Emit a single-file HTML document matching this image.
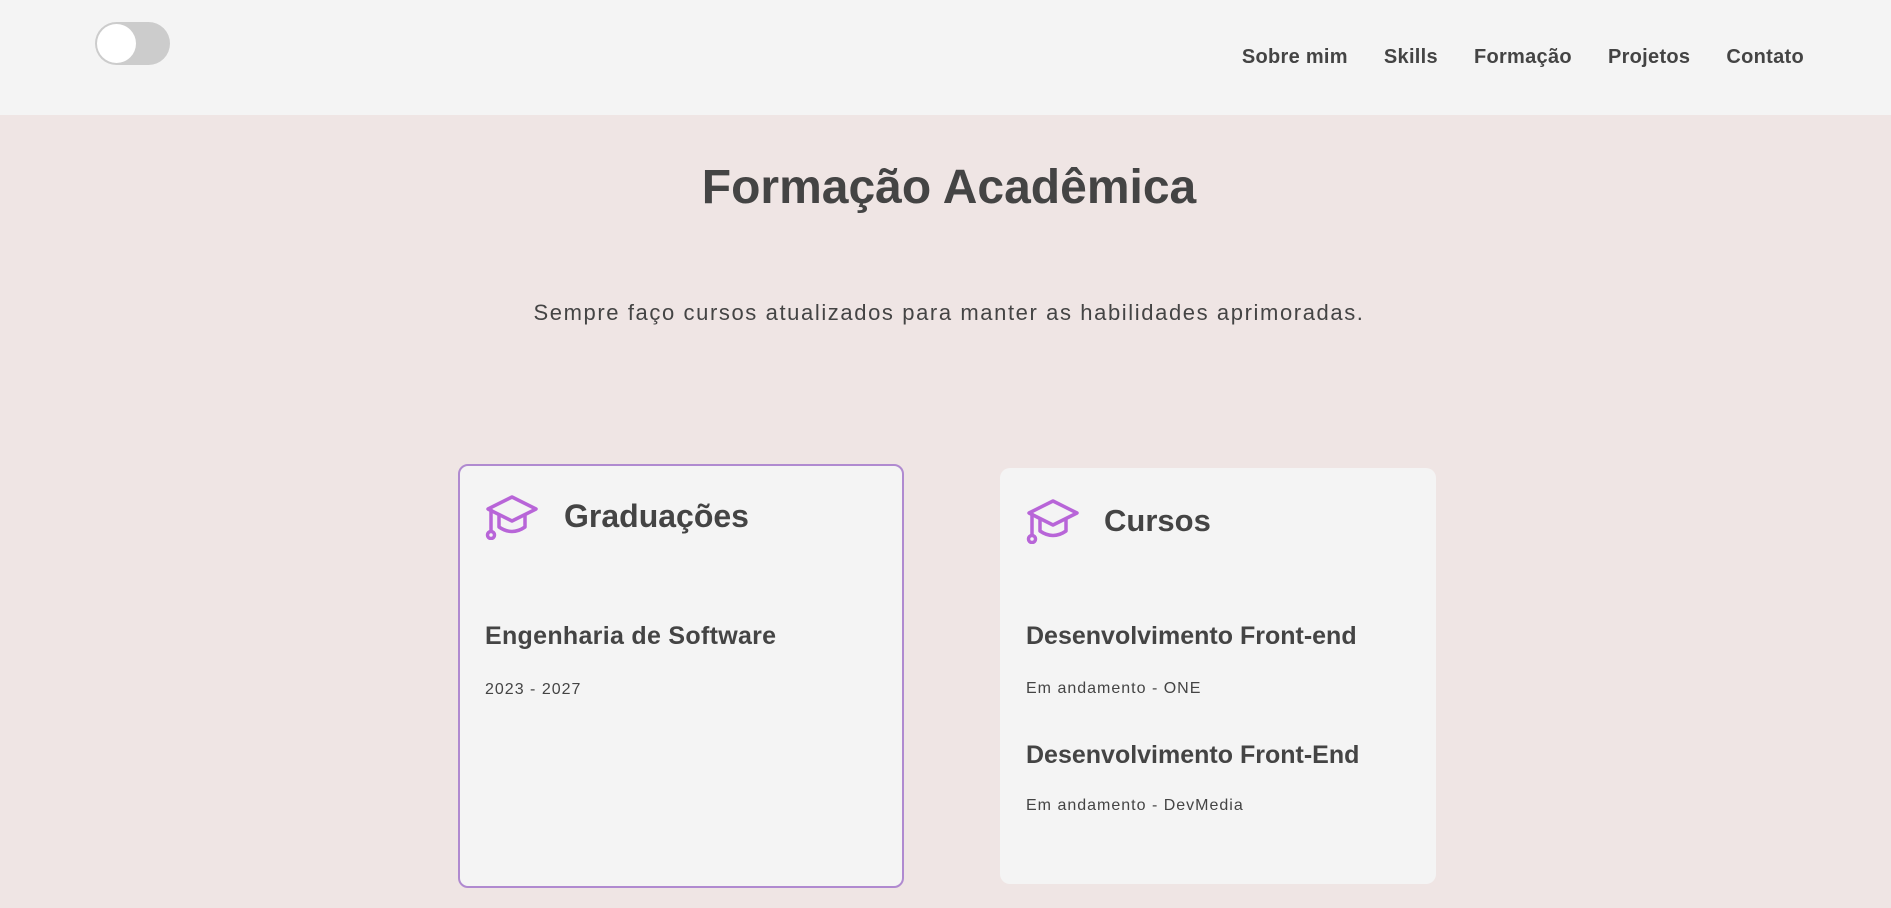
<!DOCTYPE html>
<html><head><meta charset="utf-8"><style>
*{margin:0;padding:0;box-sizing:border-box}
body{width:1891px;height:908px;overflow:hidden;background:#efe5e4;font-family:"Liberation Sans",sans-serif;color:#444;position:relative}
header{position:absolute;left:0;top:0;width:1891px;height:115px;background:#f4f4f4}
.tog{position:absolute;left:95px;top:22px;width:75px;height:43px;border-radius:22px;background:#ccc}
.tog:after{content:"";position:absolute;left:2px;top:2px;width:39px;height:39px;border-radius:50%;background:#fff}
nav{position:absolute;right:87px;top:46px;font-size:20px;font-weight:bold;display:flex;gap:36px;color:#444;letter-spacing:0.3px}
.a{position:absolute;white-space:nowrap}
h1{position:absolute;left:0;width:1898px;text-align:center;top:160px;font-size:48px;font-weight:bold}
.sub{position:absolute;left:0;width:1898px;text-align:center;top:300px;font-size:22px;letter-spacing:1.6px}
.card{position:absolute;background:#f4f4f4;border-radius:10px}
.ic{position:absolute;width:54px;height:46px}
.s{font-size:16px;letter-spacing:1px}
</style></head><body>
<header><div class="tog"></div>
<nav><span>Sobre mim</span><span>Skills</span><span>Formação</span><span>Projetos</span><span>Contato</span></nav></header>
<h1>Formação Acadêmica</h1>
<div class="sub">Sempre faço cursos atualizados para manter as habilidades aprimoradas.</div>
<div class="card" style="left:458px;top:464px;width:446px;height:424px;border:2px solid #b08ad0"></div>
<div class="card" style="left:1000px;top:468px;width:436px;height:416px"></div>
<svg class="ic" style="left:485px;top:494px" viewBox="0 0 54 46" fill="none" stroke="#b865d8" stroke-width="3.5" stroke-linejoin="round" stroke-linecap="round"><path d="M3 15 L27 3 L51 15 L27 27 Z"/><path d="M14 21 V33 Q27 42 40 33 V21"/><path d="M6 16 V37"/><circle cx="6" cy="41" r="3.5"/></svg>
<svg class="ic" style="left:1026px;top:498px" viewBox="0 0 54 46" fill="none" stroke="#b865d8" stroke-width="3.5" stroke-linejoin="round" stroke-linecap="round"><path d="M3 15 L27 3 L51 15 L27 27 Z"/><path d="M14 21 V33 Q27 42 40 33 V21"/><path d="M6 16 V37"/><circle cx="6" cy="41" r="3.5"/></svg>
<div class="a" style="left:564px;top:498px;font-size:32px;font-weight:bold">Graduações</div>
<div class="a" style="left:1104px;top:503px;font-size:31px;font-weight:bold">Cursos</div>
<div class="a" style="left:485px;top:622px;font-size:25px;font-weight:bold;letter-spacing:0.3px">Engenharia de Software</div>
<div class="a s" style="left:485px;top:681px">2023 - 2027</div>
<div class="a" style="left:1026px;top:622px;font-size:25px;font-weight:bold">Desenvolvimento Front-end</div>
<div class="a s" style="left:1026px;top:680px">Em andamento - ONE</div>
<div class="a" style="left:1026px;top:741px;font-size:25px;font-weight:bold">Desenvolvimento Front-End</div>
<div class="a s" style="left:1026px;top:797px">Em andamento - DevMedia</div>
</body></html>
